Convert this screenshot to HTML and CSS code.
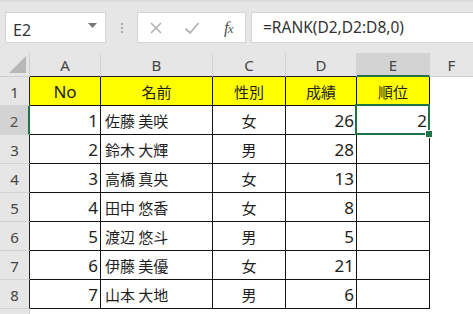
FILE: index.html
```html
<!DOCTYPE html>
<html lang="ja">
<head>
<meta charset="utf-8">
<title>RANK</title>
<link rel="stylesheet" href="styles.css">
</head>
<body>
<div class="app">
  <div class="toolbar">
    <div class="namebox">
      <span class="ref">E2</span>
      <svg class="caret" width="9" height="5" viewBox="0 0 9 5"><path d="M0 0H9L4.5 5Z" fill="#777"/></svg>
    </div>
    <div class="grip"><i></i><i></i><i></i></div>
    <div class="iconbox">
      <svg class="ico" width="14" height="14" viewBox="0 0 14 14"><path d="M2 2L12 12M12 2L2 12" stroke="#b4b4b4" stroke-width="1.6" fill="none"/></svg>
      <svg class="ico" width="16" height="14" viewBox="0 0 16 14"><path d="M1.5 7.5L6 12L14.5 2" stroke="#b4b4b4" stroke-width="1.8" fill="none"/></svg>
      <span class="fx"><i>f</i><sub>x</sub></span>
    </div>
    <div class="formula">=RANK(D2,D2:D8,0)</div>
  </div>

  <div class="sheet">
    <div class="hd corner"><span class="tri"></span></div>
    <div class="hd col">A</div>
    <div class="hd col">B</div>
    <div class="hd col">C</div>
    <div class="hd col">D</div>
    <div class="hd col sel">E</div>
    <div class="hd col last">F</div>

    <div class="hd row">1</div>
    <div class="c head num">No</div>
    <div class="c head jp">名前</div>
    <div class="c head jp">性別</div>
    <div class="c head jp">成績</div>
    <div class="c head jp">順位</div>
    <div class="c blank"></div>

    <div class="hd row selrow">2</div>
    <div class="c num r">1</div>
    <div class="c jp l">佐藤 美咲</div>
    <div class="c jp">女</div>
    <div class="c num r">26</div>
    <div class="c num r active">2<span class="selbox"><span class="handle"></span></span></div>
    <div class="c blank"></div>

    <div class="hd row">3</div>
    <div class="c num r">2</div>
    <div class="c jp l">鈴木 大輝</div>
    <div class="c jp">男</div>
    <div class="c num r">28</div>
    <div class="c"></div>
    <div class="c blank"></div>

    <div class="hd row">4</div>
    <div class="c num r">3</div>
    <div class="c jp l">高橋 真央</div>
    <div class="c jp">女</div>
    <div class="c num r">13</div>
    <div class="c"></div>
    <div class="c blank"></div>

    <div class="hd row">5</div>
    <div class="c num r">4</div>
    <div class="c jp l">田中 悠香</div>
    <div class="c jp">女</div>
    <div class="c num r">8</div>
    <div class="c"></div>
    <div class="c blank"></div>

    <div class="hd row">6</div>
    <div class="c num r">5</div>
    <div class="c jp l">渡辺 悠斗</div>
    <div class="c jp">男</div>
    <div class="c num r">5</div>
    <div class="c"></div>
    <div class="c blank"></div>

    <div class="hd row">7</div>
    <div class="c num r">6</div>
    <div class="c jp l">伊藤 美優</div>
    <div class="c jp">女</div>
    <div class="c num r">21</div>
    <div class="c"></div>
    <div class="c blank"></div>

    <div class="hd row">8</div>
    <div class="c num r">7</div>
    <div class="c jp l">山本 大地</div>
    <div class="c jp">男</div>
    <div class="c num r">6</div>
    <div class="c"></div>
    <div class="c blank"></div>

    <div class="hd row tail"></div>
    <div class="c blank span6"></div>
  </div>
</div>
</body>
</html>
```

FILE: styles.css
```css
html, body {
  margin: 0;
  padding: 0;
}
body {
  width: 473px;
  height: 314px;
  overflow: hidden;
  background: #e6e6e6;
  font-family: "Noto Sans", "Noto Sans CJK JP", sans-serif;
}
.app {
  width: 473px;
  height: 314px;
  overflow: hidden;
  display: flex;
  flex-direction: column;
}
.toolbar {
  height: 53px;
  box-sizing: border-box;
  padding: 10px 0 10px 5px;
  display: flex;
  align-items: stretch;
  border-top: 2px solid #dcdcdc;
  background: #e6e6e6;
  flex: none;
}
.namebox {
  width: 101px;
  box-sizing: border-box;
  background: #fff;
  border: 1px solid #d4d4d4;
  display: flex;
  align-items: center;
  justify-content: space-between;
  padding: 4px 8px 0 7px;
}
.ref {
  font-size: 16px;
  color: #333;
}
.caret {
  margin-top: -8px;
}
.grip {
  width: 31px;
  display: flex;
  flex-direction: column;
  align-items: center;
  justify-content: center;
  gap: 2px;
}
.grip i {
  width: 2px;
  height: 2px;
  background: #a8a8a8;
  display: block;
}
.iconbox {
  width: 109px;
  box-sizing: border-box;
  background: #fff;
  border: 1px solid #d4d4d4;
  display: flex;
  align-items: center;
  padding: 0 0 0 11px;
  gap: 21px;
}
.fx {
  font-family: "Liberation Serif", serif;
  font-style: italic;
  color: #555;
  font-size: 17px;
  margin-left: 3px;
  letter-spacing: -1px;
}
.fx i {
  font-style: italic;
}
.fx sub {
  font-size: 13px;
  vertical-align: baseline;
}
.formula {
  flex: 1;
  margin-left: 5px;
  background: #fff;
  border: 1px solid #d4d4d4;
  border-right: none;
  font-size: 15.5px;
  color: #333;
  display: flex;
  align-items: center;
  padding: 0 0 1px 11px;
}
.sheet {
  flex: 1;
  display: grid;
  grid-template-columns: 30px 71px 112px 73px 71px 73px 1fr;
  grid-template-rows: 24px repeat(8, 29px) 1fr;
  background: #fff;
}
.hd {
  background: #e6e6e6;
  color: #444;
  font-size: 15px;
  display: flex;
  align-items: center;
  justify-content: center;
  box-sizing: border-box;
}
.corner {
  border-right: 1px solid #cfcfcf;
  border-bottom: 1px solid #cfcfcf;
  position: relative;
}
.tri {
  position: absolute;
  right: 3px;
  bottom: 3px;
  width: 0;
  height: 0;
  border-left: 17px solid transparent;
  border-bottom: 17px solid #b8b8b8;
}
.col {
  border-right: 1px solid #d2d2d2;
  border-bottom: 1px solid #222;
  padding-top: 1px;
}
.col.last {
  border-right: none;
  border-bottom-color: #cfcfcf;
}
.col.sel {
  background: #d3d3d3;
  border-bottom: 2px solid #217346;
  color: #444;
}
.row {
  border-right: 1px solid #222;
  border-bottom: 1px solid #d2d2d2;
  padding-top: 1px;
}
.row.selrow {
  background: #d3d3d3;
  border-right: 2px solid #217346;
  color: #555;
}
.row.tail {
  border-right-color: #cfcfcf;
  border-bottom: none;
}
.c {
  box-sizing: border-box;
  border-right: 1px solid #111;
  border-bottom: 1px solid #111;
  display: flex;
  align-items: center;
  justify-content: center;
  color: #1e1e1e;
  padding-top: 1px;
}
.c.blank {
  border: none;
}
.span6 {
  grid-column: span 6;
}
.head {
  background: #ffff00;
}
.num {
  font-family: "Noto Sans", sans-serif;
  font-size: 17px;
}
.jp {
  font-family: "Noto Sans CJK JP", sans-serif;
  font-size: 15px;
}
.r {
  justify-content: flex-end;
  padding-right: 2px;
}
.l {
  justify-content: flex-start;
  padding-left: 4px;
}
.active {
  position: relative;
}
.selbox {
  position: absolute;
  left: -2px;
  top: -2px;
  right: -1px;
  bottom: -1px;
  border: 2px solid #217346;
}
.handle {
  position: absolute;
  right: -5px;
  bottom: -5px;
  width: 6px;
  height: 6px;
  background: #217346;
  border: 1px solid #fff;
}
```
